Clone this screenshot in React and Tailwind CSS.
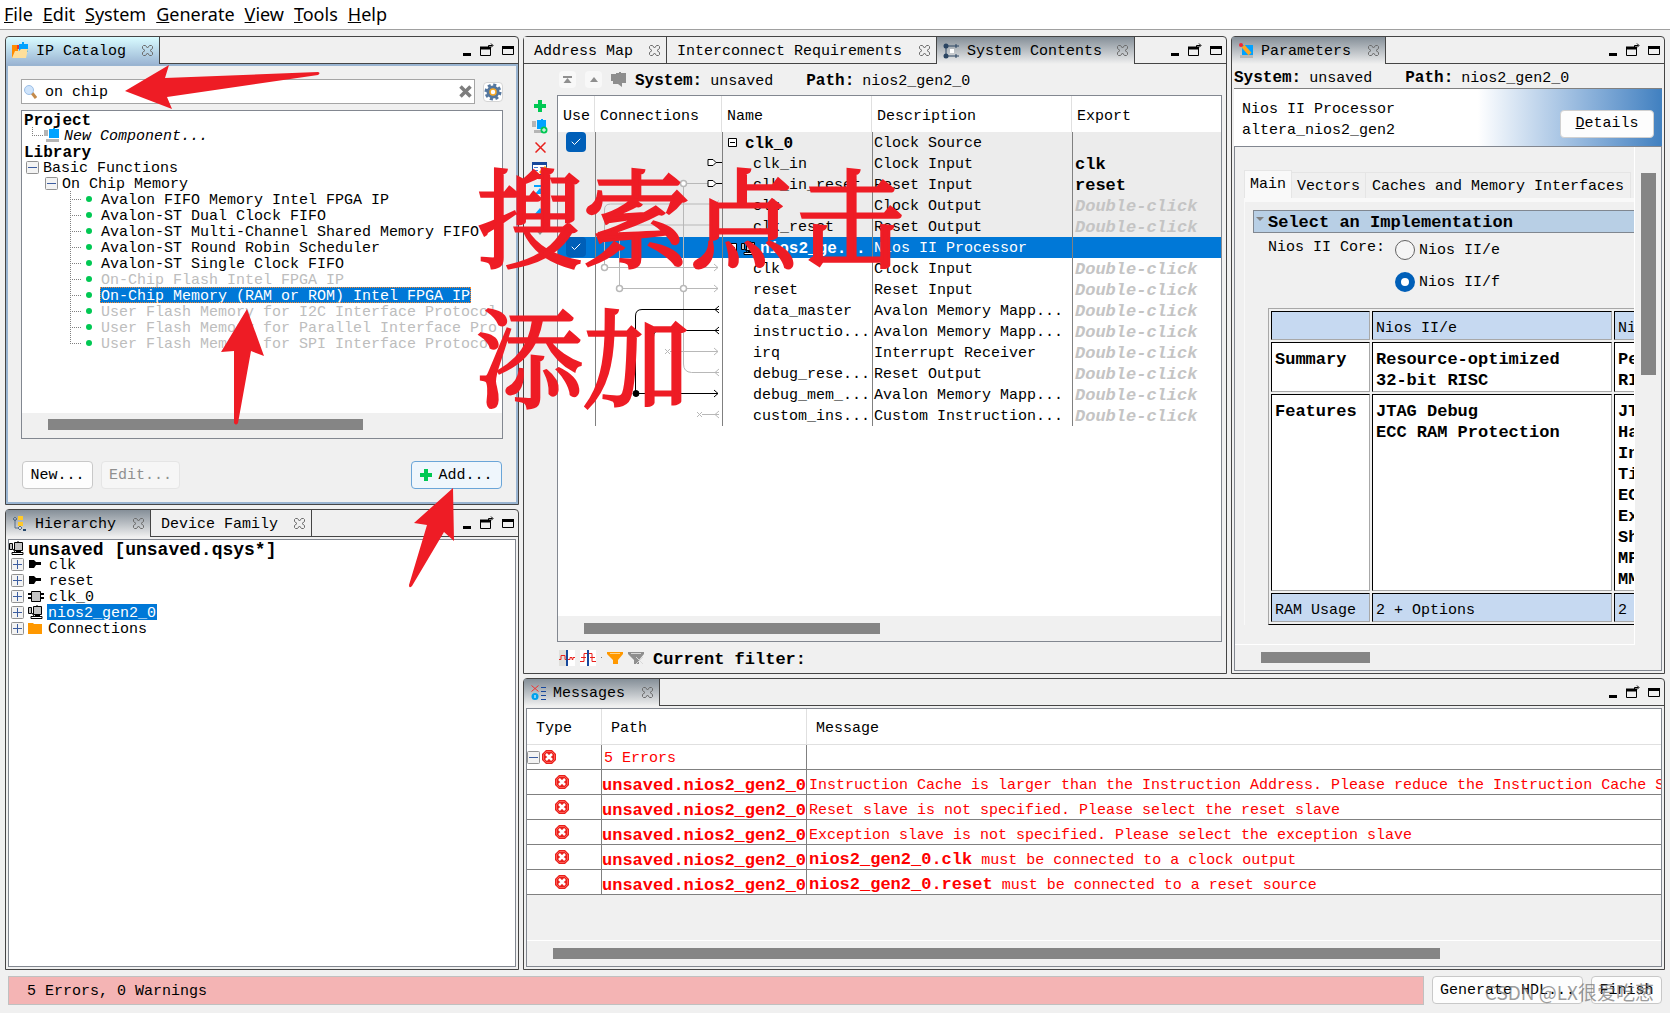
import { Check } from 'lucide-react';

const CloseIcon = () => (
  <svg width="11" height="11" viewBox="0 0 11 11" fill="none" stroke="#6b6b6b" strokeWidth="1">
    <path d="M0.5 1.5 1.5 0.5H3.5L5.5 3 7.5 0.5H9.5L10.5 1.5V3.5L8 5.5 10.5 7.5V9.5L9.5 10.5H7.5L5.5 8 3.5 10.5H1.5L0.5 9.5V7.5L3 5.5 0.5 3.5Z" />
  </svg>
);

const WindowControls = () => (
  <div className="ml-auto flex items-center gap-2 pr-1">
    <button aria-label="Minimize">
      <svg width="10" height="14"><path d="M1 11.500h8" stroke="#000" strokeWidth="3" /></svg>
    </button>
    <button aria-label="Float">
      <svg width="14" height="14" fill="none" stroke="#000">
        <path d="M0.500 4.500h10v8h-10z" />
        <path d="M0 5h11" strokeWidth="3" />
        <path d="M8.500 4V2.500h4M11 0.500l2 2-2 2" />
      </svg>
    </button>
    <button aria-label="Maximize">
      <svg width="12" height="14" fill="none" stroke="#000">
        <path d="M0.500 3.500h11v8h-11z" />
        <path d="M0 4.500h12" strokeWidth="3" />
      </svg>
    </button>
  </div>
);

const CatalogIcon = () => (
  <svg width="17" height="17" viewBox="0 0 17 17">
    <path d="M0 3h6v13H0z" fill="#ff8c00" />
    <path d="M5 3h3v4H5z" fill="#e53935" />
    <path d="M7 2h3V0h2v2h4v8H7z" fill="#00a2ff" />
    <path d="M0 16 3 9h4l2-2h7l-2 9z" fill="#ffdf9a" />
  </svg>
);

const HierarchyIcon = () => (
  <svg width="16" height="16" viewBox="0 0 16 16">
    <path d="M3 3v9M1 3l2-2 2 2-2 2zM3 12h4" stroke="#5b6f86" fill="none" />
    <path d="M6 0h5v4H6zM6 6h5v4H6z" fill="#ffc928" />
    <path d="M6 12l2-2 2 2-2 2z" fill="#cfd8e3" stroke="#5b6f86" />
    <path d="M11 13h3v2h-3z" fill="#24476b" />
  </svg>
);

const SystemIcon = () => (
  <svg width="17" height="16" viewBox="0 0 17 16">
    <path d="M3 3v10M3 3h13M3 13h13M13 1v4M13 11v4" stroke="#2b4562" fill="none" />
    <circle cx="3" cy="3" r="2.500" fill="#2b4562" />
    <circle cx="3" cy="13" r="2.500" fill="#2b4562" />
    <path d="M7 6h4v4H7z" fill="#fff" />
  </svg>
);

const ParametersIcon = () => (
  <svg width="16" height="15" viewBox="0 0 16 15">
    <path d="M4 2h11v10H4z" fill="#00a2ff" />
    <path d="M2 12h13v3H2z" fill="#b8b8b8" />
    <path d="M5 3 12 11" stroke="#ffa51f" strokeWidth="4" />
    <circle cx="3" cy="2" r="2" fill="#f32735" />
  </svg>
);

const MessagesIcon = () => (
  <svg width="16" height="15" viewBox="0 0 16 15">
    <path d="M1.500 0.500l7 6M8.500 0.500l-7 6" stroke="#f0332f" />
    <circle cx="5" cy="11.500" r="3.500" fill="#00a2ee" />
    <path d="M5 10v3" stroke="#fff" />
    <path d="M11 2.500h5M11 6.500h5M11 10.500h5M11 14.500h5" stroke="#17489c" />
  </svg>
);

const ComponentIcon = () => (
  <svg width="16" height="14" viewBox="0 0 16 14" className="shrink-0">
    <path d="M0 2h4v6H0zM2 11h13v3H2z" fill="#b5b5b5" />
    <path d="M5 1h4V0h2v1h4v9H5z" fill="#00a2ff" />
  </svg>
);

const ProcessorIcon = () => (
  <svg width="15" height="14" viewBox="0 0 15 14" className="shrink-0">
    <path d="M0.500 2.500h3v6h-3zM5.500 1.500h8v8h-8z" fill="#c4c4c4" stroke="#000" />
    <path d="M9 0v2M4 8l2 3M3 12.500h11M7 10.500h5" stroke="#000" fill="none" />
    <path d="M3 11.500h11v2H3z" fill="#fff" stroke="#000" />
  </svg>
);

const PortIcon = () => (
  <svg width="16" height="10" viewBox="0 0 16 10" className="shrink-0">
    <path d="M1 1h5l2 2h5v3H8L6 9H1z" fill="#000" />
  </svg>
);

const ChipIcon = () => (
  <svg width="16" height="11" viewBox="0 0 16 11" className="shrink-0">
    <path d="M0 3h16M0 7h16" stroke="#000" strokeWidth="2" />
    <path d="M3.500 0.500h9v10h-9z" fill="#c4c4c4" stroke="#000" />
  </svg>
);

const FolderIcon = () => (
  <svg width="15" height="12" viewBox="0 0 15 12" className="shrink-0">
    <path d="M0 1h5l1 1h8v10H0z" fill="#ff9800" />
  </svg>
);

const ExpandBox = ({ open }) => (
  <svg width="13" height="13" viewBox="0 0 13 13" className="shrink-0">
    <rect x="0.500" y="0.500" width="12" height="12" rx="1" fill="#f3f3f3" stroke="#929292" />
    <path d={open ? 'M2 6.500h9' : 'M2 6.500h9M6.500 2v9'} stroke="#3c5da0" />
  </svg>
);

const PlusIcon = () => (
  <svg width="12" height="12" viewBox="0 0 12 12" className="shrink-0">
    <path d="M4 0h4v4h4v4H8v4H4V8H0V4h4z" fill="#00c853" />
  </svg>
);

const ErrorIcon = () => (
  <svg width="14" height="14" viewBox="0 0 14 14" className="shrink-0">
    <path d="M4 0h6l4 4v6l-4 4H4l-4-4V4z" fill="#e8201c" />
    <path d="M4.500 1.500h5l3 3v5l-3 3h-5l-3-3v-5z" fill="none" stroke="#ff5a52" />
    <path d="M4 4l6 6M10 4l-6 6" stroke="#fff" strokeWidth="2.500" />
  </svg>
);

const Tab = ({ icon, active, focused, className = '', children }) => (
  <button
    role="tab"
    aria-selected={!!active}
    className={`flex items-center border-r border-[#454545] pr-[6px] ${icon ? 'pl-[6px]' : 'pl-[10px]'} ${className} ${
      active
        ? focused
          ? 'rounded-tl bg-linear-to-b from-[#d9fcff] to-[#9cb6d4]'
          : 'bg-linear-to-b from-[#858f98] to-[#f0f0f0]'
        : 'border-b bg-[#f0f0f0]'
    }`}
  >
    {icon && <span className="mr-[7px]">{icon}</span>}
    <span className="pt-1">{children}</span>
    <span className="ml-auto"><CloseIcon /></span>
  </button>
);

const Panel = ({ tabs, className = '', children }) => (
  <section className={`flex min-w-0 flex-col rounded-t border border-[#454545] bg-[#f0f0f0] ${className}`}>
    <div role="tablist" className="flex h-[27px] shrink-0">
      {tabs}
      <div className="flex flex-1 border-b border-[#454545]"><WindowControls /></div>
    </div>
    {children}
  </section>
);

const catalog = [
  ['Avalon FIFO Memory Intel FPGA IP'],
  ['Avalon-ST Dual Clock FIFO'],
  ['Avalon-ST Multi-Channel Shared Memory FIFO'],
  ['Avalon-ST Round Robin Scheduler'],
  ['Avalon-ST Single Clock FIFO'],
  ['On-Chip Flash Intel FPGA IP', 'off'],
  ['On-Chip Memory (RAM or ROM) Intel FPGA IP', 'selected'],
  ['User Flash Memory for I2C Interface Protocol', 'off'],
  ['User Flash Memory for Parallel Interface Pro', 'off'],
  ['User Flash Memory for SPI Interface Protocol', 'off'],
];

const leafStyle = {
  off: 'text-[#bdbdbd]',
  selected: 'bg-[#0078d7] text-white outline-1 -outline-offset-1 outline-dotted outline-[#ff8728]',
};

const IpCatalog = () => (
  <Panel
    className="h-[469px]"
    tabs={<Tab icon={<CatalogIcon />} active focused className="w-[154px]">IP Catalog</Tab>}
  >
    <div className="flex flex-1 flex-col border-2 border-[#99b4d1] px-[13px] pt-[13px] pb-[13px]">
      <div className="flex items-center gap-2">
        <label className="flex h-[25px] flex-1 items-center gap-2 border border-[#a5a5a5] bg-white px-[2px]">
          <svg width="13" height="14" viewBox="0 0 13 14">
            <path d="M8 8l4 5" stroke="#c48a4a" strokeWidth="3" />
            <circle cx="5" cy="5" r="4.500" fill="#cfe4fb" stroke="#9dbfe6" />
          </svg>
          <input
            aria-label="Search"
            defaultValue="on chip"
            className="min-w-0 flex-1 bg-transparent pt-[3px] outline-none"
          />
          <button aria-label="Clear">
            <svg width="13" height="13" viewBox="0 0 13 13">
              <path d="M1.500 1.500l10 10M11.500 1.500l-10 10" stroke="#7d7d7d" strokeWidth="3.500" />
            </svg>
          </button>
        </label>
        <button aria-label="Settings" className="rounded border border-[#d5d5d5] bg-white">
          <svg width="18" height="18" viewBox="0 0 18 18">
            <circle cx="9" cy="9" r="6.500" fill="#54779f" />
            <circle cx="9" cy="9" r="7" fill="none" stroke="#54779f" strokeWidth="3" strokeDasharray="3 2.500" />
            <circle cx="9" cy="9" r="3" fill="#fff" stroke="#f7a823" strokeWidth="1.500" />
          </svg>
        </button>
      </div>
      <div className="mt-[6px] flex flex-1 flex-col overflow-hidden border border-[#828790] bg-white leading-5 whitespace-nowrap">
        <div className="flex-1">
          <div className="h-4 pl-[2px] text-base leading-5 font-bold">Project</div>
          <div className="flex h-4 items-center pl-[10px] italic">
            <svg width="12" height="16" fill="none" stroke="#808080" strokeDasharray="1 1">
              <path d="M0.500 0v8M0 8.500h12" />
            </svg>
            <ComponentIcon />
            <span className="ml-1 h-4">New Component...</span>
          </div>
          <div className="h-4 pl-[2px] text-base leading-5 font-bold">Library</div>
          <div className="flex h-4 items-center gap-1 pl-1"><ExpandBox open /><span className="h-4">Basic Functions</span></div>
          <div className="flex h-4 items-center gap-1 pl-[23px]"><ExpandBox open /><span className="h-4">On Chip Memory</span></div>
          {catalog.map(([name, state], i) => (
            <div key={name} className="flex h-4 items-center pl-12">
              <svg width="24" height="16" className="shrink-0">
                <path
                  d={i === catalog.length - 1 ? 'M0.500 0v8M0 8.500h12' : 'M0.500 0v16M0 8.500h12'}
                  fill="none"
                  stroke="#808080"
                  strokeDasharray="1 1"
                />
                <circle cx="19" cy="8" r="3" fill="#00c853" />
              </svg>
              <span className={`ml-[6px] h-4 px-px ${leafStyle[state] || ''}`}>{name}</span>
            </div>
          ))}
        </div>
        <div className="h-[25px] bg-[#f0f0f0] px-[26px] pt-[6px]">
          <div className="h-[11px] w-[315px] bg-[#858585]" />
        </div>
      </div>
      <div className="mt-[22px] flex gap-2 px-px">
        <button className="h-7 w-[71px] rounded border border-[#c8c8c8] bg-[#fdfdfd] pt-[2px]">New...</button>
        <button disabled className="h-7 w-[79px] rounded border border-[#e5e5e5] bg-[#f6f6f6] pt-[2px] text-[#8f8f8f]">Edit...</button>
        <button className="ml-auto flex h-7 w-[91px] items-center justify-center gap-[6px] rounded border border-[#6aa5d8] bg-[#eff6fc]">
          <PlusIcon /><span className="pt-[2px]">Add...</span>
        </button>
      </div>
    </div>
  </Panel>
);

const hierarchy = [
  ['clk', <PortIcon />],
  ['reset', <PortIcon />],
  ['clk_0', <ChipIcon />],
  ['nios2_gen2_0', <ProcessorIcon />, true],
  ['Connections', <FolderIcon />],
];

const Hierarchy = () => (
  <Panel
    className="flex-1"
    tabs={
      <>
        <Tab icon={<HierarchyIcon />} active className="w-[145px]">Hierarchy</Tab>
        <Tab className="w-[161px]">Device Family</Tab>
      </>
    }
  >
    <div className="m-[2px] flex-1 border border-[#828790] bg-white leading-5 whitespace-nowrap">
      <div className="flex h-4 items-center gap-1">
        <ProcessorIcon />
        <span className="h-4 text-lg leading-5 font-bold">unsaved [unsaved.qsys*]</span>
      </div>
      {hierarchy.map(([name, icon, selected]) => (
        <div key={name} className="flex h-4 items-center gap-1 pl-[2px]">
          <ExpandBox />
          {icon}
          <span className={selected ? 'h-4 bg-[#0078d7] px-px text-white' : 'h-4 px-px'}>{name}</span>
        </div>
      ))}
    </div>
  </Panel>
);

const rows = [
  { name: 'clk_0', desc: 'Clock Source', kind: 'module', shade: true },
  { name: 'clk_in', desc: 'Clock Input', exp: 'clk', shade: true },
  { name: 'clk_in_reset', desc: 'Reset Input', exp: 'reset', shade: true },
  { name: 'clk', desc: 'Clock Output', shade: true },
  { name: 'clk_reset', desc: 'Reset Output', shade: true },
  { name: 'nios2_ge...', desc: 'Nios II Processor', kind: 'module', selected: true },
  { name: 'clk', desc: 'Clock Input' },
  { name: 'reset', desc: 'Reset Input' },
  { name: 'data_master', desc: 'Avalon Memory Mapp...' },
  { name: 'instructio...', desc: 'Avalon Memory Mapp...' },
  { name: 'irq', desc: 'Interrupt Receiver' },
  { name: 'debug_rese...', desc: 'Reset Output' },
  { name: 'debug_mem_...', desc: 'Avalon Memory Mapp...' },
  { name: 'custom_ins...', desc: 'Custom Instruction...' },
];

const ConnectionLines = () => (
  <svg width="127" height="294" viewBox="0 0 127 294" fill="none" className="pointer-events-none absolute top-9 left-[37px]">
    <g stroke="#b8b8b8">
      <path d="M91 51.500h22M88.500 55v98M88.500 159v73q0 8 8 8.500H124" />
      <path d="M9.500 132V78q0-6 6-6H124M24.500 153v-54q0-6 6-6H124" />
      <path d="M13 135.500h110M28 156.500h57M92 156.500h31M75 219.500h48M107 282.500h17" />
      <path d="M119 132l4 3.500-4 3.500M119 153l4 3.500-4 3.500M119 216l4 3.500-4 3.500" />
      <path d="M124 68.500l-4 3.500 4 3.500M124 89.500l-4 3.500 4 3.500M124 237l-4 3.500 4 3.500M124 279l-4 3.500 4 3.500" />
      <path d="M70 217l5 5M75 217l-5 5M102 280l5 5M107 280l-5 5" />
      <g fill="#fff" strokeWidth="1.500">
        <circle cx="88.500" cy="51.500" r="3" />
        <circle cx="9.500" cy="135.500" r="3" />
        <circle cx="24.500" cy="156.500" r="3" />
        <circle cx="88.500" cy="156.500" r="3" />
      </g>
    </g>
    <g stroke="#000">
      <path d="M113 27.500h5l3 3-3 3h-5zM113 48.500h5l3 3-3 3h-5z" fill="#fff" />
      <path d="M121 30.500h6M121 51.500h6" />
      <path d="M40.500 261V184q0-6.500 6.500-6.500H124M58.500 261v-56q0-6.500 6.500-6.500H124M40 261.500h83" />
      <path d="M124 174l-4 3.500 4 3.500M124 195l-4 3.500 4 3.500M119 258l4 3.500-4 3.500" />
      <circle cx="41" cy="261.500" r="3" fill="#000" />
    </g>
  </svg>
);

const ContentRow = ({ row }) => {
  const bg = row.selected ? 'bg-[#0078d7] text-white' : row.shade ? 'bg-[#ececec]' : '';
  return (
    <tr className={`h-[21px] ${bg}`}>
      <td className="p-0 align-top">
        {row.kind && (
          <span className="ml-2 grid size-5 place-items-center">
            <input
              type="checkbox"
              defaultChecked
              aria-label={`Use ${row.name}`}
              className="col-start-1 row-start-1 size-5 appearance-none rounded bg-[#005fb8]"
            />
            <Check className="pointer-events-none col-start-1 row-start-1 size-3 text-white" strokeWidth={2} />
          </span>
        )}
      </td>
      <td className="border-l border-[#808080] p-0" />
      <td className="overflow-hidden border-l border-[#808080] p-0">
        {row.kind ? (
          <span className="flex items-center pl-[5px] text-base font-bold">
            <svg width="9" height="9" className="shrink-0">
              <path d="M0.500 0.500h8v8h-8z" fill="#fff" stroke="#000" />
              <path d="M2 4.500h5" stroke="#000" />
            </svg>
            <span className={row.selected ? 'flex items-center gap-1 pl-1' : 'pt-[3px] pl-2 leading-[18px]'}>
              {row.selected && <ProcessorIcon />}
              {row.selected ? <span className="pt-[3px] leading-[18px]">{row.name}</span> : row.name}
            </span>
          </span>
        ) : (
          <span className="block pt-[3px] pl-[30px] leading-[18px]">{row.name}</span>
        )}
      </td>
      <td className="border-l border-[#808080] p-0 pt-[3px] pl-px leading-[18px]">{row.desc}</td>
      <td className="border-l border-[#808080] p-0 pt-[3px] pl-[2px] text-[17px] leading-[18px] font-bold">
        {row.exp || (!row.kind && <i className="text-[#c4c4c4]">Double-click</i>)}
      </td>
    </tr>
  );
};

const headCell = 'border-r border-[#e0e0e0] p-0 pt-[5px] text-left font-normal';

const tools = [
  ['Add', <PlusIcon />],
  ['Add component', (
    <svg width="16" height="15" viewBox="0 0 16 15">
      <path d="M0 2h4v6H0zM2 11h8v3H2z" fill="#b5b5b5" />
      <path d="M5 1h4V0h2v1h3v9H5z" fill="#00a2ff" />
      <circle cx="12" cy="11" r="3.500" fill="#00c853" />
      <path d="M10 11h4M12 9v4" stroke="#fff" />
    </svg>
  )],
  ['Remove', <svg width="11" height="11"><path d="M0.500 0.500l10 10M10.500 0.500l-10 10" stroke="#e8201c" strokeWidth="1.500" /></svg>],
  ['Edit', (
    <svg width="16" height="13" viewBox="0 0 16 13">
      <path d="M0.500 0.500h14v12h-14z" fill="#fff" stroke="#17489c" />
      <path d="M0 1.500h15" stroke="#17489c" strokeWidth="3" />
      <path d="M2 5.500h4M2 8.500h4M8 5.500h5" stroke="#4a7fd0" />
      <path d="M8 11l6-6" stroke="#ff9800" strokeWidth="3" />
    </svg>
  )],
  ['Move to top', <svg width="12" height="12"><path d="M0 1h12v2H0zM6 4l5 6H1z" fill="#00a2ff" /></svg>],
  ['Move up', <svg width="12" height="8"><path d="M6 1l6 7H0z" fill="#00a2ff" /></svg>],
  ['Move down', <svg width="12" height="8"><path d="M0 0h12L6 7z" fill="#8f8f8f" /></svg>],
  ['Move to bottom', <svg width="12" height="12"><path d="M1 1h10L6 7zM0 9h12v2H0z" fill="#8f8f8f" /></svg>],
];

const SystemPath = () => (
  <div className="flex items-baseline pt-[3px] leading-5">
    <b className="text-base">System:</b>
    <span className="ml-2">unsaved</span>
    <b className="ml-[33px] text-base">Path:</b>
    <span className="ml-2">nios2_gen2_0</span>
  </div>
);

const SystemContents = () => (
  <Panel
    className="h-[638px]"
    tabs={
      <>
        <Tab className="w-[143px]">Address Map</Tab>
        <Tab className="w-[270px]">Interconnect Requirements</Tab>
        <Tab icon={<SystemIcon />} active className="w-[198px]">System Contents</Tab>
      </>
    }
  >
    <div className="flex h-[31px] items-center pl-[35px]">
      <button aria-label="Top level" className="grid size-[17px] place-items-center rounded bg-[#f8f8f8]">
        <svg width="9" height="8"><path d="M0 1h9" stroke="#8f8f8f" strokeWidth="2" /><path d="M4.500 2l4 5h-8z" fill="#8f8f8f" /></svg>
      </button>
      <button aria-label="Up" className="ml-[9px] grid size-[17px] place-items-center rounded bg-[#f8f8f8]">
        <svg width="8" height="5"><path d="M4 0l4 5H0z" fill="#8f8f8f" /></svg>
      </button>
      <button aria-label="Drill down" className="mr-2 ml-[9px]">
        <svg width="16" height="16" viewBox="0 0 16 16">
          <path d="M0 2h5V1h3V0h2v1h5v10h-4v4l-4-3H2v-3H0z" fill="#8d8d8d" />
        </svg>
      </button>
      <SystemPath />
    </div>
    <div className="flex flex-1">
      <div className="flex w-8 flex-col items-center">
        {tools.map(([label, icon]) => (
          <button key={label} aria-label={label} className="grid h-[21px] w-5 place-items-center">{icon}</button>
        ))}
      </div>
      <div className="mr-1 ml-px flex min-w-0 flex-1 flex-col border border-[#828790] bg-white">
        <div className="relative flex-1">
          <table className="w-full table-fixed border-separate border-spacing-0 leading-5 whitespace-nowrap">
            <colgroup>
              <col className="w-[37px]" />
              <col className="w-[127px]" />
              <col className="w-[150px]" />
              <col className="w-[200px]" />
              <col />
            </colgroup>
            <thead>
              <tr className="h-9">
                <th className={`${headCell} pl-[5px]`}>Use</th>
                <th className={`${headCell} pl-[5px]`}>Connections</th>
                <th className={`${headCell} pl-[5px]`}>Name</th>
                <th className={`${headCell} pl-[5px]`}>Description</th>
                <th className="p-0 pt-[5px] pl-[5px] text-left font-normal">Export</th>
              </tr>
            </thead>
            <tbody>
              {rows.map((row, i) => <ContentRow key={i} row={row} />)}
            </tbody>
          </table>
          <ConnectionLines />
        </div>
        <div className="h-[25px] bg-[#f0f0f0] px-[26px] pt-[7px]">
          <div className="h-[11px] w-[296px] bg-[#858585]" />
        </div>
      </div>
    </div>
    <div className="flex h-[31px] items-center gap-[5px] pl-[35px]">
      <svg width="16" height="16">
        <path d="M0 0h8v16H0z" fill="#e0e0dc" />
        <path d="M8 0h8v16H8z" fill="#fff" />
        <path d="M0 9.500h2v-4h4v4h2M9 9.500h2v-2h2v2h1v-2h2" fill="none" stroke="#e8201c" />
        <path d="M8 0v16" stroke="#17489c" strokeWidth="2" />
      </svg>
      <svg width="16" height="16">
        <path d="M0 0h16v16H0z" fill="#fff" />
        <path d="M0 11.500h4v-8h8v8h4M1 7.500h5M10 7.500h5" fill="none" stroke="#e8201c" />
        <path d="M8 0v16" stroke="#17489c" strokeWidth="2" />
      </svg>
      <span className="size-px bg-[#808080]" />
      <svg width="16" height="14"><path d="M0 1h16v2l-5 6v4H6V9L0 3z" fill="#ff9800" /><path d="M3 2.500h10" stroke="#ffd48a" /></svg>
      <svg width="16" height="14"><path d="M0 1h16v2l-5 6v4H6V9L0 3z" fill="#8f8f8f" /><path d="M3 2.500h10M8 6l7 7M15 6l-7 7" stroke="#d8d8d8" /></svg>
      <b className="ml-1 pt-[5px] text-[17px]">Current filter:</b>
    </div>
  </Panel>
);

const implCell = 'border border-t-black border-r-[#a8a8a8] border-b-[#a8a8a8] border-l-black px-[3px]';

const radio = 'size-5 appearance-none rounded-full border border-[#626262] bg-[#f5f5f5] checked:border-[6px] checked:border-[#005fb8] checked:bg-white';

const Parameters = () => (
  <Panel
    className="h-[638px]"
    tabs={<Tab icon={<ParametersIcon />} active className="w-[154px]">Parameters</Tab>}
  >
    <div className="flex h-6 items-center pl-[2px]"><SystemPath /></div>
    <div className="mx-[2px] flex h-[58px] items-center border-t border-[#808080] bg-linear-to-r from-white from-57% to-[#4080c0] pl-2 leading-[21px]">
      <div className="pt-1">
        <div>Nios II Processor</div>
        <div>altera_nios2_gen2</div>
      </div>
      <button className="mt-3 mr-2 ml-auto h-7 w-[94px] rounded border border-[#d0d0d0] bg-[#fdfdfd]">
        <u>D</u>etails
      </button>
    </div>
    <div className="mx-[2px] mb-[2px] flex min-h-0 flex-1 flex-col border border-[#828790]">
      <div className="flex min-h-0 flex-1">
        <div className="min-w-0 flex-1 overflow-hidden border-r border-b border-white pt-[23px] pl-[9px]">
          <div role="tablist" className="flex h-7 items-end whitespace-nowrap">
            <button role="tab" aria-selected="true" className="h-7 shrink-0 border border-b-0 border-[#e5e5e5] bg-[#f9f9f9] px-[5px] pt-[2px]">Main</button>
            <button role="tab" aria-selected="false" className="h-[26px] shrink-0 border-t border-r border-[#e5e5e5] px-[5px] pt-[3px]">Vectors</button>
            <button role="tab" aria-selected="false" className="h-[26px] shrink-0 border-t border-r border-[#e5e5e5] px-[6px] pt-[3px]">Caches and Memory Interfaces</button>
          </div>
          <div className="border-t-4 border-l border-[#f9f9f9] pt-2 pl-2">
            <div className="flex h-[23px] items-center border border-r-0 border-[#808790] bg-[#b8cfe5] pl-[2px] text-[17px] font-bold">
              <svg width="8" height="8" className="mb-1"><path d="M0 1h8L4 5z" fill="#808080" /></svg>
              <span className="ml-1 pt-[3px]">Select an Implementation</span>
            </div>
            <fieldset className="flex pl-[15px]">
              <span className="pt-1">Nios II Core:</span>
              <div className="ml-[10px] flex flex-col gap-3 pt-[7px]">
                <label className="flex h-5 items-center gap-1">
                  <input type="radio" name="core" className={radio} />
                  <span className="pt-[3px]">Nios II/e</span>
                </label>
                <label className="flex h-5 items-center gap-1">
                  <input type="radio" name="core" defaultChecked className={radio} />
                  <span className="pt-[3px]">Nios II/f</span>
                </label>
              </div>
            </fieldset>
            <table className="mt-4 ml-[15px] w-[600px] table-fixed border-separate border-spacing-[2px] border border-[#a8a8a8] border-b-black leading-[21px]">
              <colgroup>
                <col className="w-[99px]" />
                <col className="w-[240px]" />
                <col />
              </colgroup>
              <tbody className="align-top">
                <tr className="h-[29px] bg-[#c6d9f1] align-middle">
                  <td className={implCell} />
                  <td className={`${implCell} pt-[6px]`}>Nios II/e</td>
                  <td className={`${implCell} pt-[6px]`}>Nios II/f</td>
                </tr>
                <tr className="h-[50px] bg-white text-[17px] font-bold">
                  <td className={`${implCell} pt-[6px]`}>Summary</td>
                  <td className={`${implCell} pt-[6px] pb-0`}>Resource-optimized<br />32-bit RISC</td>
                  <td className={`${implCell} pt-[6px] pb-0`}>Performance-optimized<br />RISC</td>
                </tr>
                <tr className="h-[197px] bg-white text-[17px] font-bold">
                  <td className={`${implCell} pt-[6px]`}>Features</td>
                  <td className={`${implCell} pt-[6px]`}>JTAG Debug<br />ECC RAM Protection</td>
                  <td className={`${implCell} pt-[6px]`}>
                    JTAG<br />Hardware<br />Instruction<br />Tightly<br />ECC<br />External<br />Shadow<br />MPU<br />MMU
                  </td>
                </tr>
                <tr className="h-[29px] bg-[#c6d9f1] align-middle">
                  <td className={`${implCell} pt-[6px]`}>RAM Usage</td>
                  <td className={`${implCell} pt-[6px]`}>2 + Options</td>
                  <td className={`${implCell} pt-[6px]`}>2 + Options</td>
                </tr>
              </tbody>
            </table>
          </div>
        </div>
        <div className="w-[26px] pt-[26px] pl-[6px]">
          <div className="h-[202px] w-[15px] bg-[#858585]" />
        </div>
      </div>
      <div className="h-[25px] px-[26px] pt-[7px]">
        <div className="h-[11px] w-[109px] bg-[#858585]" />
      </div>
    </div>
  </Panel>
);

const errors = [
  ['', 'Instruction Cache is larger than the Instruction Address. Please reduce the Instruction Cache S'],
  ['', 'Reset slave is not specified. Please select the reset slave'],
  ['', 'Exception slave is not specified. Please select the exception slave'],
  ['nios2_gen2_0.clk', ' must be connected to a clock output'],
  ['nios2_gen2_0.reset', ' must be connected to a reset source'],
];

const msgCell = 'overflow-hidden border-r border-b border-[#808080] p-0';

const Messages = () => (
  <Panel
    className="flex-1"
    tabs={<Tab icon={<MessagesIcon />} active className="w-[136px]">Messages</Tab>}
  >
    <div className="m-[2px] flex flex-1 flex-col border border-[#828790]">
      <table className="w-full table-fixed border-separate border-spacing-0 bg-white leading-4 whitespace-nowrap text-[#fe0000]">
        <colgroup>
          <col className="w-[75px]" />
          <col className="w-[205px]" />
          <col />
        </colgroup>
        <thead className="text-black">
          <tr className="h-9">
            <th className={`${headCell} border-b pl-[9px]`}>Type</th>
            <th className={`${headCell} border-b pl-[9px]`}>Path</th>
            <th className="border-b border-[#e0e0e0] p-0 pt-[5px] pl-[9px] text-left font-normal">Message</th>
          </tr>
        </thead>
        <tbody>
          <tr className="h-[25px]">
            <td className={msgCell}><span className="flex items-center gap-[2px]"><ExpandBox open /><ErrorIcon /></span></td>
            <td className={`${msgCell} pt-1 pl-[2px]`}>5 Errors</td>
            <td className="border-b border-[#808080]" />
          </tr>
          {errors.map(([source, text]) => (
            <tr key={source + text} className="h-[25px] align-bottom">
              <td className={`${msgCell} align-middle`}><span className="flex pl-7"><ErrorIcon /></span></td>
              <td className={`${msgCell} text-[17px] font-bold`}>unsaved.nios2_gen2_0</td>
              <td className="overflow-hidden border-b border-[#808080] p-0 pl-[2px]">
                {source && <b className="text-[17px]">{source}</b>}
                <span className="whitespace-pre">{text}</span>
              </td>
            </tr>
          ))}
        </tbody>
      </table>
      <div className="mt-auto h-[26px] border-t border-white px-[26px] pt-[7px]">
        <div className="h-[11px] w-[82%] bg-[#858585]" />
      </div>
    </div>
  </Panel>
);

const menu = ['File', 'Edit', 'System', 'Generate', 'View', 'Tools', 'Help'];

// red tutorial notes drawn over the window
const Annotations = () => (
  <div className="pointer-events-none absolute inset-0 overflow-hidden">
    <svg width="530" height="600" className="absolute top-0 left-0" fill="#ee1c25">
      <path d="M125 91 169 65 165 78 318 72q3 1 0 3L167 97 172 109Z" />
      <path d="M247 309 264 356 251 351 238 423q-2 3-4 0L234 351 221 352Z" />
      <path d="M453 488 454 541 444 532 412 586q-3 3-3-1L427 525 414 523Z" />
    </svg>
    <p className="absolute top-[143px] left-[476px] font-['SimSun','Noto_Serif_CJK_SC','Noto_Sans_CJK_SC',serif] text-[107px] leading-[140px] whitespace-nowrap text-[#ee1c25] [-webkit-text-stroke:3px_#ee1c25]">
      搜索点击<br />添加
    </p>
  </div>
);

export default function App() {
  return (
    <div className="relative flex min-h-screen flex-col bg-[#f0f0f0] font-['Liberation_Mono','Noto_Sans_CJK_SC',monospace] text-[15px] text-black">
      <nav className="flex h-[30px] items-center gap-[10px] border-b border-[#a0a0a0] bg-white pl-1 font-['Noto_Sans',sans-serif] text-[18px]">
        {menu.map((item) => (
          <button key={item}><u>{item[0]}</u>{item.slice(1)}</button>
        ))}
      </nav>
      <main className="flex flex-1 gap-1 px-[5px] pt-[6px]">
        <div className="flex w-[514px] shrink-0 flex-col gap-1">
          <IpCatalog />
          <Hierarchy />
        </div>
        <div className="flex min-w-0 flex-1 flex-col gap-1">
          <div className="grid grid-cols-[minmax(0,1fr)_434px] gap-1">
            <SystemContents />
            <Parameters />
          </div>
          <Messages />
        </div>
      </main>
      <footer className="relative flex h-[43px] items-start gap-2 px-2 pt-[6px]">
        <div className="flex h-[29px] flex-1 items-center border border-[#c0c0c0] bg-[#f4b4b4] pt-[3px] pl-[18px]">5 Errors, 0 Warnings</div>
        <button className="h-7 w-[151px] rounded border border-[#c8c8c8] bg-[#fdfdfd] pt-[3px]">Generate HDL...</button>
        <button className="h-7 w-[71px] rounded border border-[#c8c8c8] bg-[#fdfdfd] pt-[3px]">Finish</button>
        <span className="absolute top-[10px] right-4 font-['Noto_Sans_CJK_SC',sans-serif] text-[19px] leading-6 text-[#707070]/70">CSDN @LX很爱吃葱</span>
      </footer>
      <Annotations />
    </div>
  );
}
